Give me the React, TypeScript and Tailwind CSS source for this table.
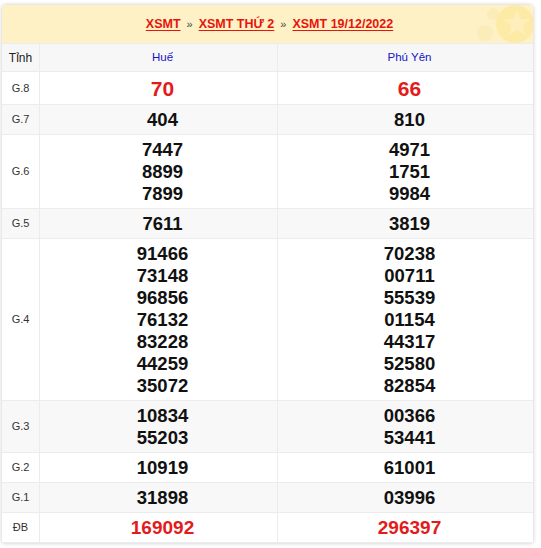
import React from "react";

type Row = { label: string; a: string[]; b: string[]; kind?: "g8" | "db"; alt?: boolean };

const rows: Row[] = [
  { label: "G.8", a: ["70"], b: ["66"], kind: "g8" },
  { label: "G.7", a: ["404"], b: ["810"], alt: true },
  { label: "G.6", a: ["7447", "8899", "7899"], b: ["4971", "1751", "9984"] },
  { label: "G.5", a: ["7611"], b: ["3819"], alt: true },
  {
    label: "G.4",
    a: ["91466", "73148", "96856", "76132", "83228", "44259", "35072"],
    b: ["70238", "00711", "55539", "01154", "44317", "52580", "82854"],
  },
  { label: "G.3", a: ["10834", "55203"], b: ["00366", "53441"], alt: true },
  { label: "G.2", a: ["10919"], b: ["61001"] },
  { label: "G.1", a: ["31898"], b: ["03996"], alt: true },
  { label: "ĐB", a: ["169092"], b: ["296397"], kind: "db" },
];

function NumCell({ nums, kind, last }: { nums: string[]; kind?: string; last?: boolean }) {
  const cls =
    kind === "g8"
      ? "text-[21px] leading-[25px] text-[#e31b1b]"
      : kind === "db"
      ? "text-[19px] leading-[22px] text-[#e31b1b]"
      : "text-[18.5px] leading-[22px] text-[#111]";
  return (
    <div
      className={`flex flex-col items-center justify-center pl-2 pt-1 pb-[3px] border-b border-[#ececec] ${
        last ? "" : "border-r"
      }`}
    >
      {nums.map((n, i) => (
        <div key={i} className={`font-bold ${cls}`}>
          {n}
        </div>
      ))}
    </div>
  );
}

export default function App() {
  return (
    <div className="bg-white w-[541px] h-[548px] pt-[5px] pl-[2px]" style={{ fontFamily: '"Liberation Sans", Arial, sans-serif' }}>
      <div className="w-[531px] rounded-t-[4px] shadow-[0_0_4px_rgba(0,0,0,0.22)] bg-white overflow-hidden">
        <div className="relative h-[38px] bg-[#fdf1c5] flex items-center justify-center">
          <svg className="absolute right-0 top-0" width="70" height="38" viewBox="0 0 70 38">
            <circle cx="30" cy="9" r="6" fill="#fbe7a8" opacity="0.45" />
            <circle cx="22" cy="28" r="8" fill="#fbe7a8" opacity="0.4" />
            <circle cx="52" cy="19" r="19" fill="#fde89c" opacity="0.8" />
            <polygon
              points="54,4 57.5,14 68,14 59.5,20.5 62.5,31 54,24.5 45.5,31 48.5,20.5 40,14 50.5,14"
              fill="#fdeebf"
              opacity="0.9"
            />
          </svg>
          <div className="relative flex items-center gap-[6px] text-[12.5px] font-bold pl-1">
            <span className="text-[#e8140c] underline underline-offset-2">XSMT</span>
            <span className="text-[#444] text-[11px] font-normal">»</span>
            <span className="text-[#e8140c] underline underline-offset-2">XSMT THỨ 2</span>
            <span className="text-[#444] text-[11px] font-normal">»</span>
            <span className="text-[#e8140c] underline underline-offset-2">XSMT 19/12/2022</span>
          </div>
        </div>
        <div className="grid grid-cols-[38px_238px_1fr] border-t border-[#ececec]">
          <div className="bg-[#f7f7f7] border-r border-b border-[#ececec] h-[28px] flex items-center justify-center text-[12px] text-[#222]">
            Tỉnh
          </div>
          <div className="bg-[#f7f7f7] border-r border-b border-[#ececec] h-[28px] flex items-center justify-center pl-2 text-[11.5px] text-[#1414c8]">
            Huế
          </div>
          <div className="bg-[#f7f7f7] border-b border-[#ececec] h-[28px] flex items-center justify-center pl-2 text-[11.5px] text-[#1414c8]">
            Phú Yên
          </div>
          {rows.map((r) => (
            <React.Fragment key={r.label}>
              <div
                className={`flex items-center justify-center border-r border-b border-[#ececec] text-[11px] text-[#333] ${
                  r.alt ? "bg-[#f8f8f8]" : "bg-white"
                }`}
              >
                {r.label}
              </div>
              <div className={r.alt ? "bg-[#f8f8f8] grid" : "bg-white grid"}>
                <NumCell nums={r.a} kind={r.kind} />
              </div>
              <div className={r.alt ? "bg-[#f8f8f8] grid" : "bg-white grid"}>
                <NumCell nums={r.b} kind={r.kind} last />
              </div>
            </React.Fragment>
          ))}
        </div>
      </div>
    </div>
  );
}
